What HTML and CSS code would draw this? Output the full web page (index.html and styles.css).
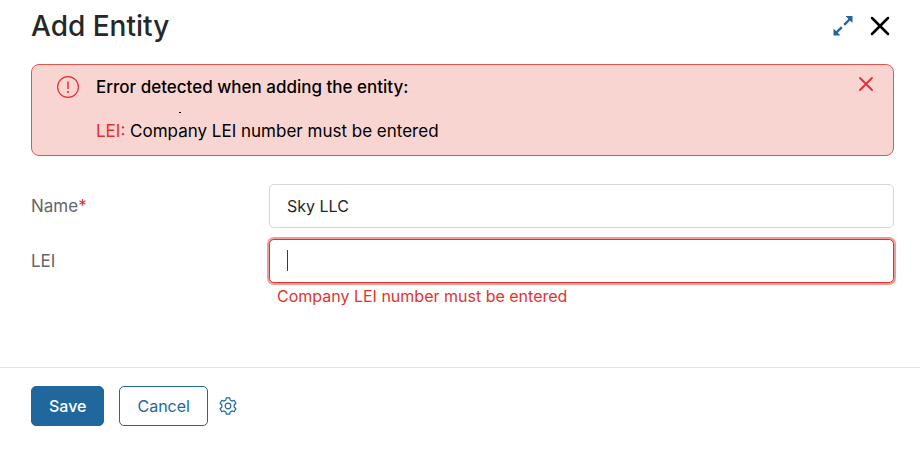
FILE: index.html
```html
<!DOCTYPE html>
<html lang="en">
<head>
<meta charset="utf-8">
<meta name="viewport" content="width=device-width, initial-scale=1">
<title>Add Entity</title>
<link rel="stylesheet" href="styles.css">
</head>
<body>
<form class="dialog">
  <header class="dialog-header">
    <h1 class="title">Add Entity</h1>
    <button type="button" class="icon-button" aria-label="Expand">
      <svg width="20" height="20" viewBox="0 0 20 20"><g fill="#1f679c"><path d="M12.500 0h7v7zM.500 12.500v7h7z"/></g><path d="M11.200 8.800 17 3M8.800 11.200 3 17" stroke="#1f679c" stroke-width="2.400" fill="none"/></svg>
    </button>
    <button type="button" class="icon-button" aria-label="Close">
      <svg width="20" height="20" viewBox="0 0 20 20"><path d="m2 2 16 16M18 2 2 18" stroke="#000" stroke-width="2.500" stroke-linecap="round"/></svg>
    </button>
  </header>

  <section class="alert" role="alert">
    <svg class="alert-icon" width="24" height="24" viewBox="0 0 24 24"><circle cx="12" cy="12" r="10.400" fill="none" stroke="#e2302f" stroke-width="1.200"/><path d="M12 6.500v7.500" stroke="#e2302f" stroke-width="1.500"/><circle cx="12" cy="17" r="1.100" fill="#e2302f"/></svg>
    <div class="alert-body">
      <strong class="alert-title">Error detected when adding the entity:</strong>
      <p class="alert-text"><span class="alert-field">LEI:</span> Company LEI number must be entered</p>
    </div>
    <button type="button" class="icon-button alert-close" aria-label="Dismiss">
      <svg width="16" height="16" viewBox="0 0 16 16"><path d="m2 2 12 12M14 2 2 14" stroke="#e62d32" stroke-width="1.900" stroke-linecap="round"/></svg>
    </button>
  </section>

  <div class="fields">
    <div class="field">
      <label class="label" for="name">Name<span class="required">*</span></label>
      <div class="control"><input class="input" id="name" type="text" value="Sky LLC" required></div>
    </div>
    <div class="field">
      <label class="label" for="lei">LEI</label>
      <div class="control caret">
        <input class="input input-invalid" id="lei" type="text" aria-invalid="true" aria-describedby="lei-error">
        <p class="error" id="lei-error">Company LEI number must be entered</p>
      </div>
    </div>
  </div>

  <footer class="dialog-footer">
    <button type="button" class="button button-primary">Save</button>
    <button type="button" class="button">Cancel</button>
    <button type="button" class="icon-button settings" aria-label="Settings">
      <svg width="20" height="20" viewBox="0 0 20 20" fill="none" stroke="#1f679c" stroke-width="1.200" stroke-linejoin="round"><path d="M8.300 1.800h3.400l.500 2.300 1.700 1 2.300-.800 1.700 2.900-1.700 1.600v2.400l1.700 1.600-1.700 2.900-2.300-.800-1.700 1-.500 2.300H8.300l-.500-2.300-1.700-1-2.300.800-1.700-2.900 1.700-1.600V8.800L2.100 7.200l1.700-2.900 2.300.800 1.700-1z"/><circle cx="10" cy="10" r="2.800"/></svg>
    </button>
  </footer>
</form>
</body>
</html>
```
FILE: styles.css
```css
* {
  box-sizing: border-box;
}

body {
  margin: 0;
  background: #fff;
  color: #000;
  font-family: Inter, "Liberation Sans", sans-serif;
  font-size: 16px;
  line-height: 24px;
}

p {
  margin: 0;
}

.dialog-header {
  display: flex;
  align-items: center;
  gap: 17px;
  padding: 8px 30px 0 31px;
}

.title {
  flex: 1;
  margin: 0;
  color: #252828;
  font-size: 28px;
  font-weight: 500;
  line-height: 36px;
}

.icon-button {
  display: flex;
  padding: 0;
  border: 0;
  background: none;
  cursor: pointer;
}

.alert {
  display: flex;
  align-items: flex-start;
  margin: 20px 26px 0 31px;
  padding: 10px 19px 12px 24px;
  border: 1px solid #e2554f;
  border-radius: 8px;
  background: #f8d5d1;
}

.alert-body {
  position: relative;
  flex: 1;
  margin-left: 16px;
  font-size: 17px;
}

.alert-body::before {
  content: "";
  position: absolute;
  top: 37px;
  left: 83px;
  width: 2px;
  height: 1px;
  background: #000;
}

.alert-title {
  display: block;
  font-weight: 500;
}

.alert-text {
  margin-top: 20px;
}

.alert-field {
  color: #e62d32;
}

.alert-close {
  padding-top: 1px;
}

.fields {
  display: grid;
  gap: 11px;
  padding: 28px 26px 0 31px;
}

.field {
  display: grid;
  grid-template-columns: 238px 1fr;
  align-items: start;
}

.label {
  padding: 10px 0;
  color: #666;
  font-size: 17px;
}

.required {
  color: #e2302f;
}

.control {
  position: relative;
}

.input {
  display: block;
  width: 100%;
  height: 44px;
  padding: 0 17px;
  border: 1px solid #d8d8d8;
  border-radius: 5px;
  background: #fff;
  color: #252828;
  font: inherit;
  outline: 0;
}

.input-invalid {
  border-color: #df342e;
  box-shadow: 0 0 0 2px #f19c98;
}

.caret::before {
  content: "";
  position: absolute;
  top: 11px;
  left: 18px;
  width: 1px;
  height: 21px;
  background: #333a45;
}

.error {
  padding: 1px 8px 0;
  color: #df342e;
}

.dialog-footer {
  display: flex;
  align-items: center;
  margin-top: 59px;
  padding: 18px 31px;
  border-top: 1px solid #e4e4e4;
}

.button {
  height: 40px;
  padding: 0 17px;
  border: 1px solid #1f679c;
  border-radius: 5px;
  background: #fff;
  color: #1f679c;
  font: inherit;
  cursor: pointer;
}

.button-primary {
  margin-right: 15px;
  background: #1f679c;
  color: #fff;
  font-weight: 500;
}

.settings {
  margin-left: 10px;
}
```
